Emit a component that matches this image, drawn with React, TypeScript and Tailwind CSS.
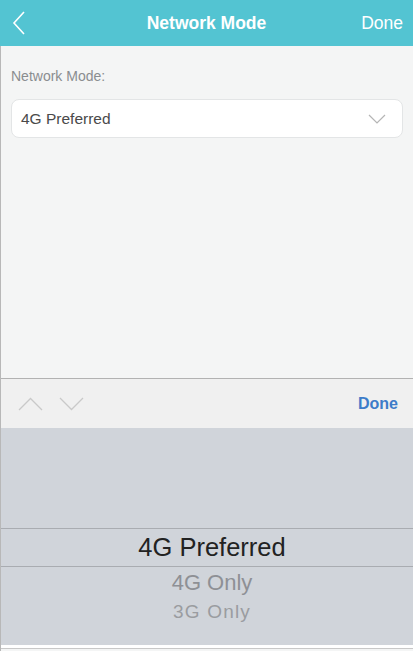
export default function App() {
  return (
    <div className="w-[413px] h-[651px] flex flex-col bg-[#f4f5f5] overflow-hidden font-['Liberation_Sans',Arial,sans-serif]">
      <header className="h-[46px] shrink-0 bg-[#53c4d2] flex items-center pl-3 pr-[10px] relative">
        <svg width="14" height="24" viewBox="0 0 14 24" className="shrink-0">
          <path d="M12 1 L2 12 L12 23" fill="none" stroke="white" strokeWidth="1.6" />
        </svg>
        <div className="absolute inset-0 flex items-center justify-center text-white text-[17.5px] font-bold">
          Network Mode
        </div>
        <div className="flex-1" />
        <span className="text-white text-[17.5px]">Done</span>
      </header>
      <div className="flex-1 border-l border-[#b8b8b8] flex flex-col">
        <div className="h-[332px] px-[10px] pt-[20px]">
          <div className="text-[14px] text-[#8a8d90]">Network Mode:</div>
          <div className="mt-[12px] h-[39px] bg-white border border-[#e3e5e6] rounded-[8px] flex items-center pl-[9px] pr-[16px]">
            <span className="flex-1 text-[15.5px] text-[#4a4a4a]">4G Preferred</span>
            <svg width="18" height="10" viewBox="0 0 18 10">
              <path d="M1 1 L9 9 L17 1" fill="none" stroke="#b5b5b5" strokeWidth="1.2" />
            </svg>
          </div>
        </div>
        <div className="h-[50px] shrink-0 border-t border-[#b2b2b2] bg-[#f0f0f0] flex items-center pl-[17px] pr-[15px]">
          <svg width="25" height="14" viewBox="0 0 25 14">
            <path d="M1 13 L12.5 1.5 L24 13" fill="none" stroke="#c9c9c9" strokeWidth="1.3" />
          </svg>
          <svg width="25" height="14" viewBox="0 0 25 14" className="ml-[16px]">
            <path d="M1 1 L12.5 12.5 L24 1" fill="none" stroke="#c9c9c9" strokeWidth="1.3" />
          </svg>
          <div className="flex-1" />
          <span className="text-[16px] font-bold text-[#3d7cc9]">Done</span>
        </div>
        <div className="h-[217px] shrink-0 bg-[#d0d4da] flex flex-col">
          <div className="h-[100px]" />
          <div className="h-[39px] border-y border-[#a9acb1] flex items-center justify-center pl-[10px] text-[25.5px] text-[#222]">
            4G Preferred
          </div>
          <div className="h-[31px] flex items-center justify-center pl-[10px] text-[22px] text-[#8e9095]">4G Only</div>
          <div className="h-[29px] flex items-center justify-center pl-[10px] text-[19px] text-[#9a9ca0] tracking-[1.2px]">3G Only</div>
        </div>
        <div className="h-[3px] bg-white" />
        <div className="flex-1 border-t border-[#c8c8c8] bg-[#f4f5f5]" />
      </div>
    </div>
  )
}
